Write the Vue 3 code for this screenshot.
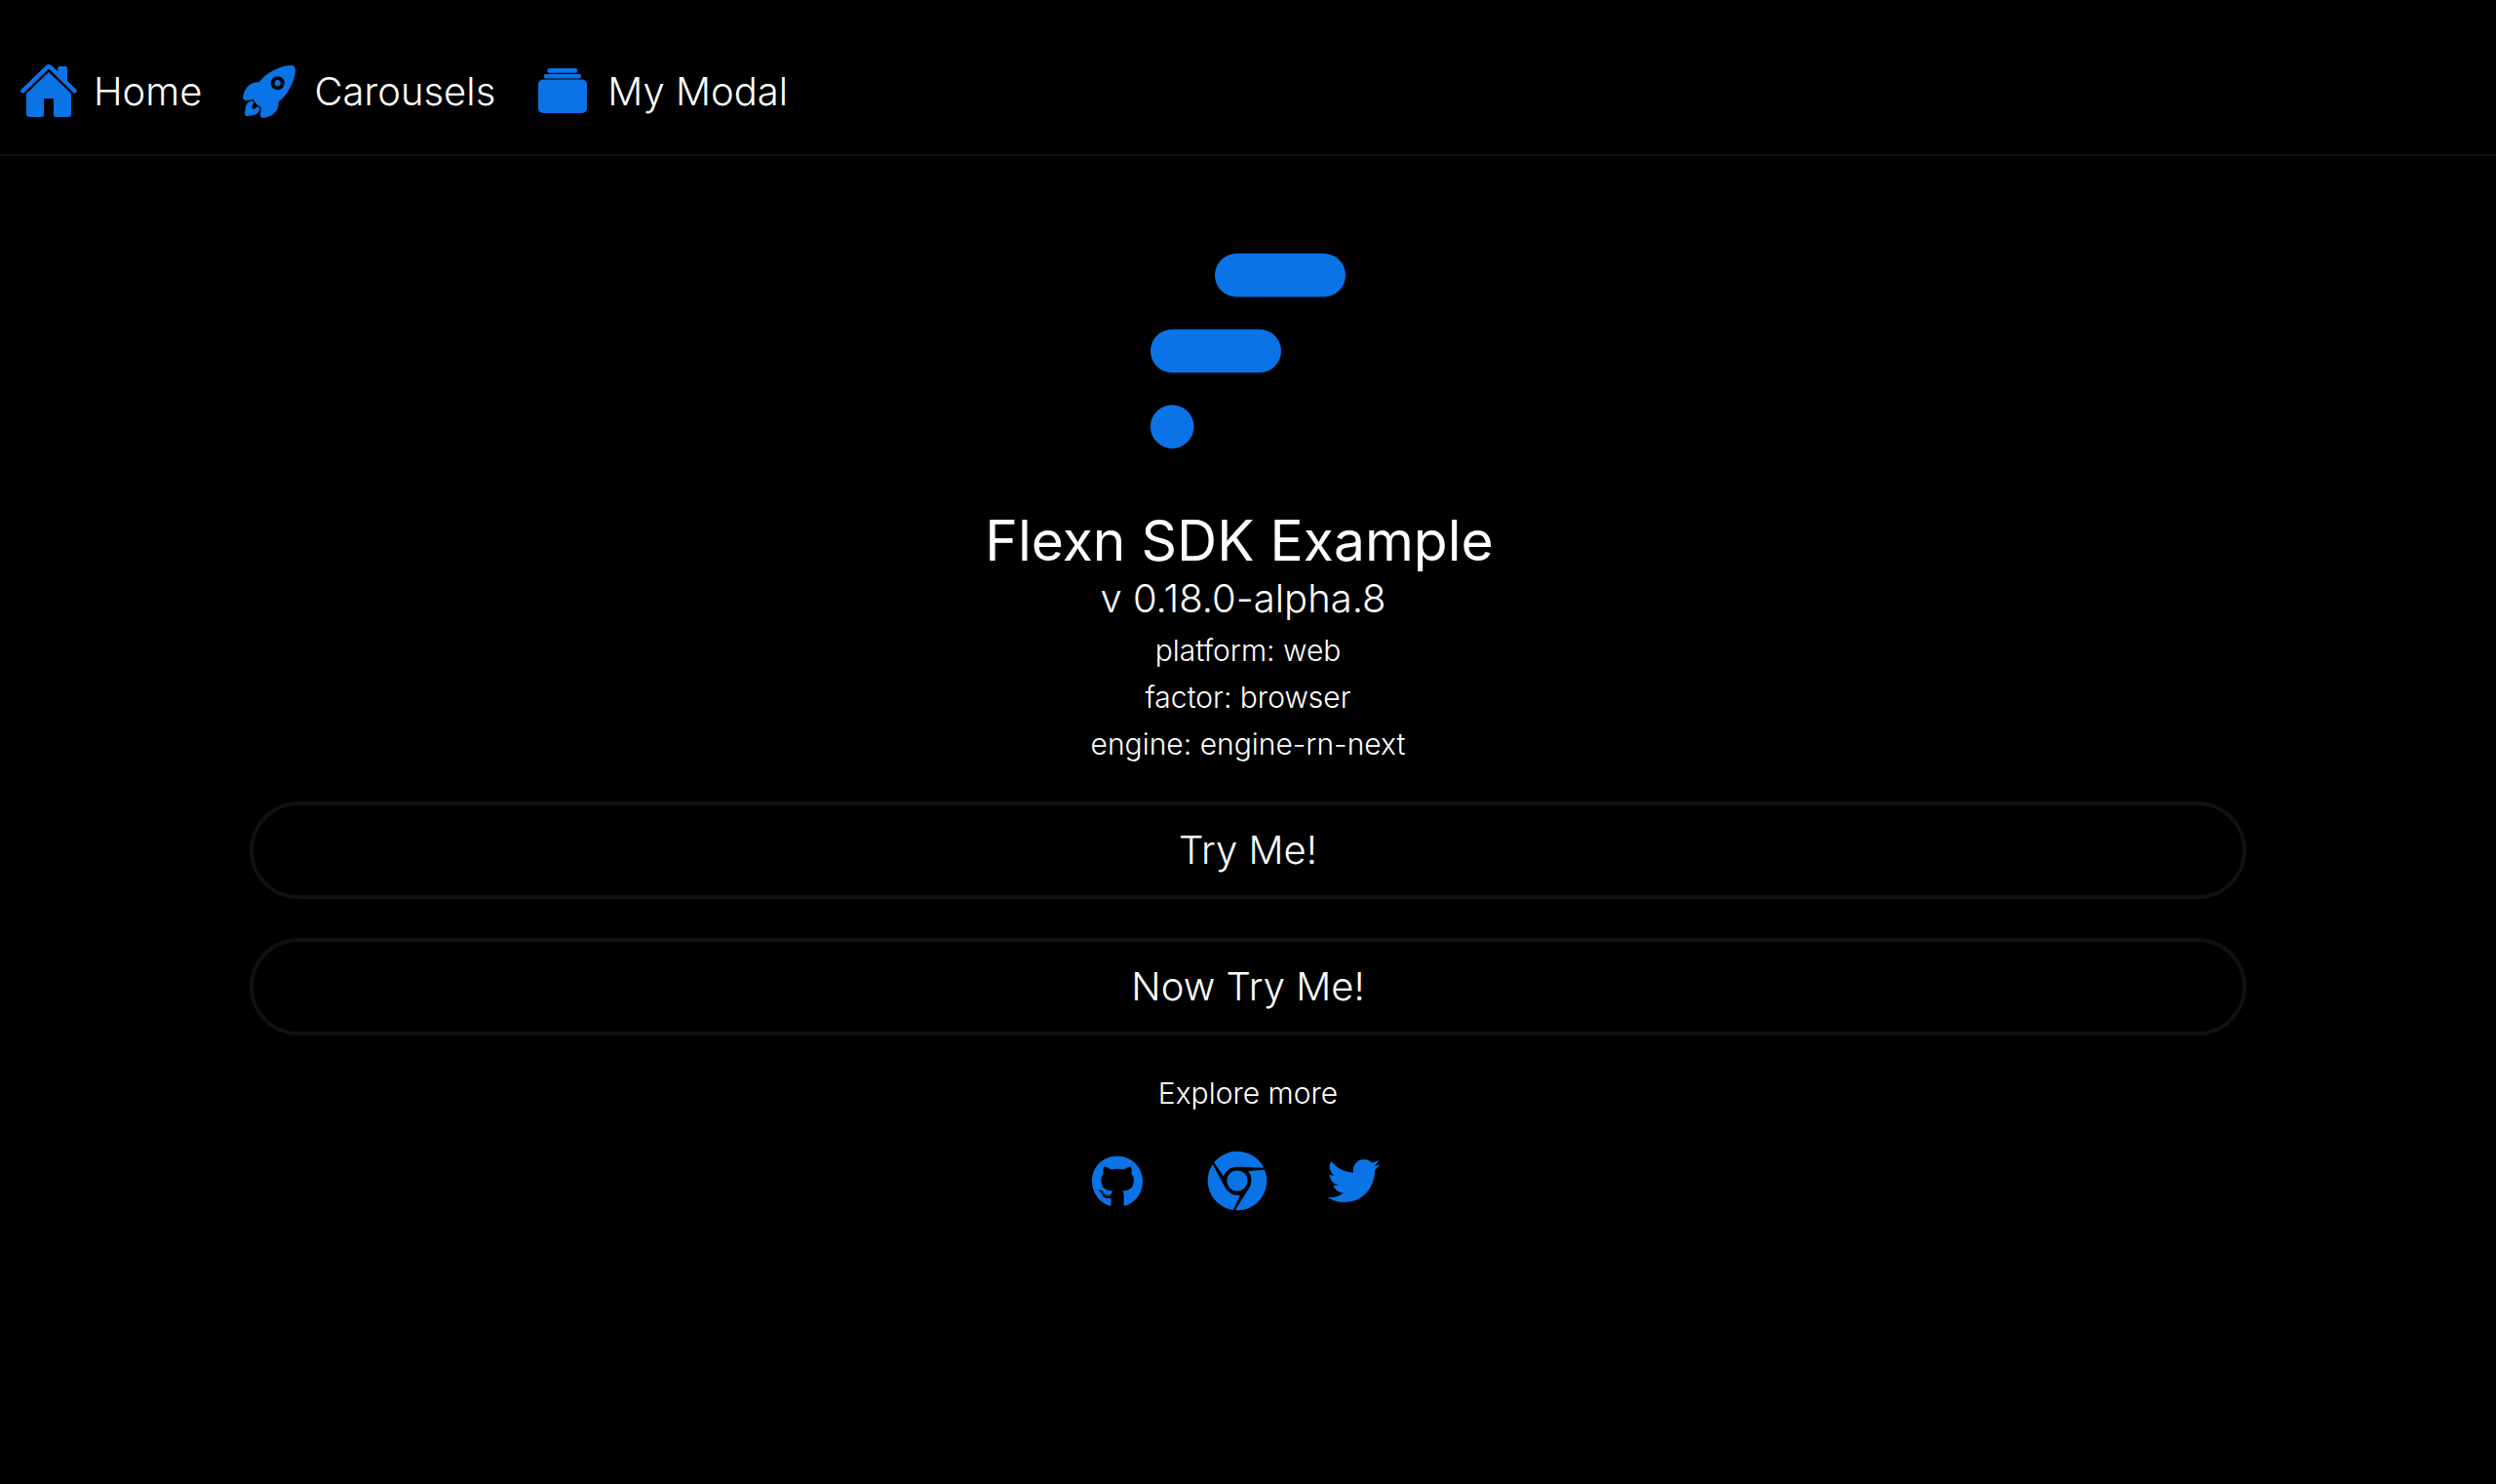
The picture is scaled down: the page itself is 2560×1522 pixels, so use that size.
<script setup>
const details = ['platform: web', 'factor: browser', 'engine: engine-rn-next']
const actions = ['Try Me!', 'Now Try Me!']
</script>

<template>
  <div class="page">
    <header class="header">
      <nav class="nav">
        <a class="nav-item" href="#home">
          <svg class="nav-icon" viewBox="60 72 180 180" aria-hidden="true">
            <path d="M70 160 144 88Q150 82 156 88L230 160" fill="none" stroke="currentColor" stroke-width="13" stroke-linecap="round" />
            <path d="M178 108V90Q178 84 184 84H201Q207 84 207 90V138Z" />
            <path d="M150 102 219 168V231Q219 240 210 240H171Q165 240 165 234V183H135V234Q135 240 129 240H90Q81 240 81 231V168Z" />
          </svg>
          <span>Home</span>
        </a>
        <a class="nav-item" href="#carousels">
          <svg class="nav-icon" viewBox="6 6 500 500" aria-hidden="true">
            <path d="M328.850 156.790a26.690 26.690 0 1018.880 7.810 26.600 26.600 0 00-18.880-7.810z" />
            <path d="M477.440 50.060a.29.29 0 010-.09 20.400 20.400 0 00-15.130-15.300c-29.800-7.270-76.680.48-128.630 21.280-52.360 21-101.420 52-134.580 85.220A320.700 320.700 0 00169.550 175c-22.330-1-42 2.180-58.570 9.410-57.740 25.410-74.230 90.440-78.620 117.140a25 25 0 0027.190 29h.13l64.320-7.020c.08.82.17 1.570.24 2.260a34.360 34.360 0 009.900 20.720l31.390 31.410a34.270 34.270 0 0020.710 9.910l2.150.23-7 64.240v.13A25 25 0 00206 480a25.250 25.250 0 004.150-.34C237 475.340 302 459.050 327.340 401c7.170-16.460 10.340-36.050 9.450-58.340a314.780 314.780 0 0033.950-29.550c33.430-33.260 64.530-81.920 85.310-133.520 20.690-51.360 28.480-98.590 21.390-129.530zM370.380 224.940a58.770 58.770 0 110-83.070 58.300 58.300 0 010 83.070z" />
            <path d="M161.930 386.440a16 16 0 00-11 2.670c-6.390 4.370-12.810 8.690-19.290 12.900-13.110 8.520-28.790-6.440-21-20l12.150-21a16 16 0 00-15.160-24.910A61.250 61.250 0 0072 353.560c-3.660 3.670-14.790 14.810-20.780 57.260A357.940 357.940 0 0048 447.590 16 16 0 0064 464h.4a359.870 359.870 0 0036.800-3.200c42.470-6 53.610-17.140 57.270-20.800a60.490 60.490 0 0017.390-35.740 16 16 0 00-13.930-17.820z" />
          </svg>
          <span>Carousels</span>
        </a>
        <a class="nav-item" href="#my-modal">
          <svg class="nav-icon" viewBox="0 0 60 60" aria-hidden="true">
            <rect x="14.300" y="6" width="31" height="4.800" rx="2.200" />
            <rect x="10.800" y="12" width="38.300" height="4.500" rx="2" />
            <rect x="5" y="17.500" width="50" height="34.500" rx="5" />
          </svg>
          <span>My Modal</span>
        </a>
      </nav>
    </header>

    <main class="content">
      <svg class="logo" viewBox="0 0 200 200" role="img" aria-label="Flexn">
        <rect x="66" y="0" width="134" height="44.500" rx="22.250" />
        <rect x="0" y="77.700" width="134" height="44.500" rx="22.250" />
        <circle cx="22.200" cy="177.600" r="22.300" />
      </svg>

      <h1 class="title">Flexn SDK Example</h1>
      <p class="version">v 0.18.0-alpha.8</p>
      <p v-for="line in details" :key="line" class="detail">{{ line }}</p>

      <div class="actions">
        <button v-for="label in actions" :key="label" class="action" type="button">{{ label }}</button>
      </div>

      <p class="detail">Explore more</p>

      <div class="links">
        <a href="#github" aria-label="GitHub">
          <svg class="brand" viewBox="-38 -38 572 572" aria-hidden="true">
            <path d="M165.900 397.400c0 2-2.300 3.600-5.200 3.600-3.300.3-5.600-1.300-5.600-3.600 0-2 2.300-3.600 5.200-3.600 3-.3 5.600 1.300 5.600 3.600zm-31.100-4.500c-.7 2 1.300 4.300 4.300 4.900 2.600 1 5.600 0 6.200-2s-1.300-4.300-4.300-5.200c-2.600-.7-5.500.3-6.200 2.300zm44.200-1.700c-2.900.7-4.900 2.600-4.600 4.900.3 2 2.900 3.300 5.900 2.600 2.900-.7 4.900-2.600 4.600-4.600-.3-1.900-3-3.200-5.900-2.900zM244.800 8C106.100 8 0 113.300 0 252c0 110.900 69.800 205.800 169.500 239.200 12.800 2.300 17.300-5.600 17.300-12.100 0-6.200-.3-40.400-.3-61.400 0 0-70 15-84.700-29.800 0 0-11.400-29.100-27.800-36.600 0 0-22.900-15.700 1.600-15.400 0 0 24.900 2 38.600 25.800 21.900 38.600 58.600 27.500 72.900 20.900 2.300-16 8.800-27.100 16-33.700-55.900-6.200-112.300-14.300-112.300-110.500 0-27.500 7.600-41.300 23.600-58.900-2.600-6.500-11.100-33.300 2.600-67.900 20.900-6.500 69 27 69 27 20-5.600 41.500-8.500 62.800-8.500s42.800 2.900 62.800 8.500c0 0 48.100-33.600 69-27 13.700 34.700 5.200 61.400 2.600 67.900 16 17.700 25.800 31.500 25.800 58.900 0 96.500-58.900 104.200-114.800 110.500 9.200 7.900 17 22.900 17 46.400 0 33.700-.3 75.400-.3 83.600 0 6.500 4.600 14.400 17.300 12.100C428.200 457.800 496 362.900 496 252 496 113.300 383.500 8 244.800 8zM97.200 352.900c-1.300 1-1 3.300.7 5.200 1.600 1.600 3.900 2.300 5.200 1 1.300-1 1-3.300-.7-5.200-1.600-1.600-3.900-2.300-5.200-1zm-10.800-8.100c-.7 1.300.3 2.900 2.300 3.900 1.600 1 3.600.7 4.300-.7.7-1.300-.3-2.900-2.300-3.900-2-.6-3.600-.3-4.300.7zm32.400 35.600c-1.600 1.300-1 4.300 1.300 6.200 2.300 2.300 5.200 2.600 6.500 1 1.300-1.300.7-4.300-1.300-6.200-2.200-2.300-5.200-2.600-6.500-1zm-11.400-14.700c-1.600 1-1.600 3.600 0 5.900 1.600 2.300 4.300 3.300 5.600 2.300 1.600-1.300 1.600-3.900 0-6.200-1.400-2.300-4-3.300-5.600-2z" />
          </svg>
        </a>
        <a href="#website" aria-label="Website">
          <svg class="brand wide" viewBox="-33 -31 64 62" aria-hidden="true">
            <circle r="10.600" />
            <path v-for="turn in 3" :key="turn" :transform="`rotate(${turn * 120})`" d="M-23.800-18.700-14.300-4.700A15 15 0 0 1 1-14.200L27.300-13.300A30.400 30.400 0 0 0-23.800-18.700Z" />
          </svg>
        </a>
        <a href="#twitter" aria-label="Twitter">
          <svg class="brand" viewBox="-14 -28 568 568" aria-hidden="true">
            <path d="M459.370 151.716c.325 4.548.325 9.097.325 13.645 0 138.720-105.583 298.558-298.558 298.558-59.452 0-114.680-17.219-161.137-47.106 8.447.974 16.568 1.299 25.340 1.299 49.055 0 94.213-16.568 130.274-44.832-46.132-.975-84.792-31.188-98.112-72.772 6.498.974 12.995 1.624 19.818 1.624 9.421 0 18.843-1.300 27.614-3.573-48.081-9.747-84.143-51.980-84.143-102.985v-1.299c13.969 7.797 30.214 12.670 47.431 13.319-28.264-18.843-46.781-51.005-46.781-87.391 0-19.492 5.197-37.360 14.294-52.954 51.655 63.675 129.300 105.258 216.365 109.807-1.624-7.797-2.599-15.918-2.599-24.040 0-57.828 46.782-104.934 104.934-104.934 30.213 0 57.502 12.670 76.670 33.137 23.715-4.548 46.456-13.320 66.599-25.340-7.798 24.366-24.366 44.833-46.132 57.827 21.117-2.273 41.584-8.122 60.426-16.243-14.292 20.791-32.161 39.308-52.628 54.253z" />
          </svg>
        </a>
      </div>
    </main>
  </div>
</template>

<style>
body {
  background: #000;
}
</style>

<style scoped>
.page {
  min-height: 100vh;
  background: #000;
  color: #fff;
  font-family: Inter, sans-serif;
  font-size: 40px;
  font-weight: 350;
  line-height: 48px;
}

svg {
  display: block;
  fill: currentColor;
}

.header {
  padding: 64px 20px 34px;
  border-bottom: 2px solid #111;
}

.nav {
  display: flex;
  gap: 39px;
}

.nav-item {
  display: flex;
  align-items: center;
  gap: 16px;
  color: inherit;
  text-decoration: none;
}

.nav-icon {
  width: 60px;
  height: 60px;
  color: #0a74e6;
}

.content {
  display: flex;
  flex-direction: column;
  align-items: center;
  padding: 100px 10% 60px;
}

.logo {
  width: 200px;
  height: 200px;
  color: #0a74e6;
}

.title {
  margin: 60px 0 0;
  padding-right: 18px;
  font-size: 57px;
  font-weight: 400;
  line-height: 70px;
}

.version {
  margin: 0 0 5px;
  padding-right: 10px;
}

.detail {
  margin: 0;
  font-size: 30px;
}

.actions {
  display: flex;
  flex-direction: column;
  gap: 40px;
  width: 100%;
  margin: 35px 0;
}

.action {
  height: 100px;
  padding: 0;
  border: 4px solid #111;
  border-radius: 50px;
  background: transparent;
  color: inherit;
  font: inherit;
  cursor: pointer;
}

.links {
  display: flex;
  align-items: center;
  gap: 60px;
  margin: 35px 24px 0 0;
  color: #0a74e6;
}

.links a {
  color: inherit;
}

.brand {
  width: 60px;
  height: 60px;
}

.brand.wide {
  width: 64px;
  height: 62px;
}
</style>
